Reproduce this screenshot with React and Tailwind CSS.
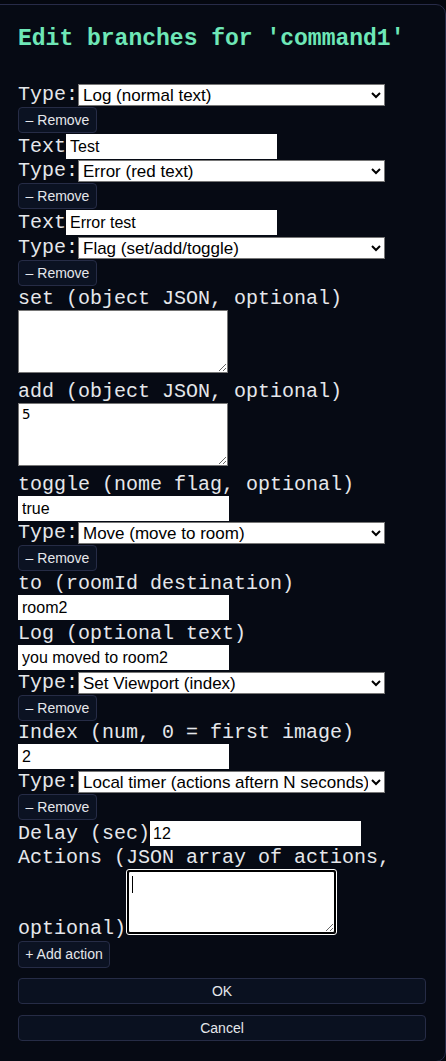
import React from "react";

const mono = "font-['Liberation_Mono','Courier_New',monospace]";
const sans = "font-['Liberation_Sans',Arial,sans-serif]";

export default function App() {
  return (
    <div className="min-h-screen bg-[#04070f] pt-[4px] overflow-hidden">
      <div className="-ml-[12px] w-[458px] border border-[#272b48] rounded-[10px] bg-[#060a14] pl-[29px] pt-[21px] pb-[20px]">
        <h2 className={`${mono} text-[23px] leading-[26px] font-bold text-[#6ee7b7]`}>
          Edit branches for 'command1'
        </h2>

        <div className="mt-[32px]" />
        <TypeRow value="Log (normal text)" />
        <RemoveBtn />
        <TextRow value="Test" />
        <TypeRow value="Error (red text)" />
        <RemoveBtn />
        <TextRow value="Error test" />
        <TypeRow value="Flag (set/add/toggle)" mt="mt-[1px]" />
        <RemoveBtn />

        <Label className="mt-[1px]">set (object JSON, optional)</Label>
        <Area value="" />
        <Label className="mt-[7px]">add (object JSON, optional)</Label>
        <Area value="5" />
        <Label className="mt-[7px]">toggle (nome flag, optional)</Label>
        <Field value="true" />

        <TypeRow value="Move (move to room)" mt="mt-[1px]" />
        <RemoveBtn />
        <Label className="mt-[1px]">to (roomId destination)</Label>
        <Field value="room2" />
        <Label className="mt-[2px]">Log (optional text)</Label>
        <Field value="you moved to room2" />

        <TypeRow value="Set Viewport (index)" mt="mt-[2px]" />
        <RemoveBtn />
        <Label>Index (num, 0 = first image)</Label>
        <Field value="2" />

        <TypeRow value="Local timer (actions aftern N seconds)" mt="mt-[2px]" />
        <RemoveBtn />
        <div className="mt-[1px] h-[25px] flex items-center">
          <span className={`${mono} text-[20px] leading-[25px] text-[#e5e7eb] whitespace-pre`}>Delay (sec)</span>
          <input
            readOnly
            value="12"
            className={`${sans} w-[211px] h-[25px] bg-white text-black text-[16px] px-[3px] outline-none`}
          />
        </div>
        <Label>Actions (JSON array of actions,</Label>
        <div className="h-[66px] flex items-end">
          <span className={`${mono} text-[20px] leading-[12px] text-[#e5e7eb]`}>optional)</span>
          <div className="relative w-[211px] h-[66px] border border-white rounded-[3px] bg-black p-[1px]">
            <textarea
              readOnly
              value=""
              className="block w-full h-full bg-white border border-black rounded-[2px] outline-none resize-y"
            />
            <span className="absolute left-[5px] top-[6px] w-[1px] h-[17px] bg-black" />
          </div>
        </div>

        <button className={`${sans} mt-[6px] block w-[92px] h-[27px] rounded-[4px] border border-[#262c46] bg-[#0b1222] text-[#e5e7eb] text-[14px]`}>
          + Add action
        </button>
        <button className={`${sans} mt-[10px] block w-[408px] h-[26px] rounded-[4px] border border-[#262c46] bg-[#0a1120] text-[#e5e7eb] text-[14px]`}>
          OK
        </button>
        <button className={`${sans} mt-[11px] block w-[408px] h-[26px] rounded-[4px] border border-[#262c46] bg-[#0a1120] text-[#e5e7eb] text-[14px]`}>
          Cancel
        </button>
      </div>
    </div>
  );
}

function Label({ children, className = "" }) {
  return (
    <div className={`${mono} ${className} text-[20px] leading-[23px] h-[23px] text-[#e5e7eb] whitespace-pre`}>
      {children}
    </div>
  );
}

function TypeRow({ value, mt = "" }) {
  return (
    <div className={`${mt} h-[22px] flex items-center`}>
      <span className={`${mono} w-[60px] text-[20px] leading-[22px] text-[#e5e7eb]`}>Type:</span>
      <select
        value={value}
        onChange={() => {}}
        className={`${sans} w-[307px] h-[22px] bg-white text-black text-[17px] border border-[#767676] pl-0`}
      >
        <option>{value}</option>
      </select>
    </div>
  );
}

function RemoveBtn() {
  return (
    <button className={`${sans} mt-[1px] block w-[79px] h-[26px] rounded-[4px] border border-[#262c46] bg-[#0b1222] text-[#e5e7eb] text-[14px]`}>
      – Remove
    </button>
  );
}

function TextRow({ value }) {
  return (
    <div className="mt-[1px] h-[26px] flex items-start">
      <span className={`${mono} w-[48px] text-[20px] leading-[25px] text-[#e5e7eb]`}>Text</span>
      <input
        readOnly
        value={value}
        className={`${sans} w-[211px] h-[25px] bg-white text-black text-[16px] px-[4px] outline-none`}
      />
    </div>
  );
}

function Field({ value }) {
  return (
    <input
      readOnly
      value={value}
      className={`${sans} block w-[211px] h-[25px] bg-white text-black text-[16px] px-[4px] outline-none`}
    />
  );
}

function Area({ value }) {
  return (
    <textarea
      readOnly
      value={value}
      className="block w-[210px] h-[63px] bg-white text-black border border-[#767676] font-['DejaVu_Sans_Mono',monospace] text-[14px] leading-[17px] px-[3px] py-[2px] outline-none resize-y"
    />
  );
}
